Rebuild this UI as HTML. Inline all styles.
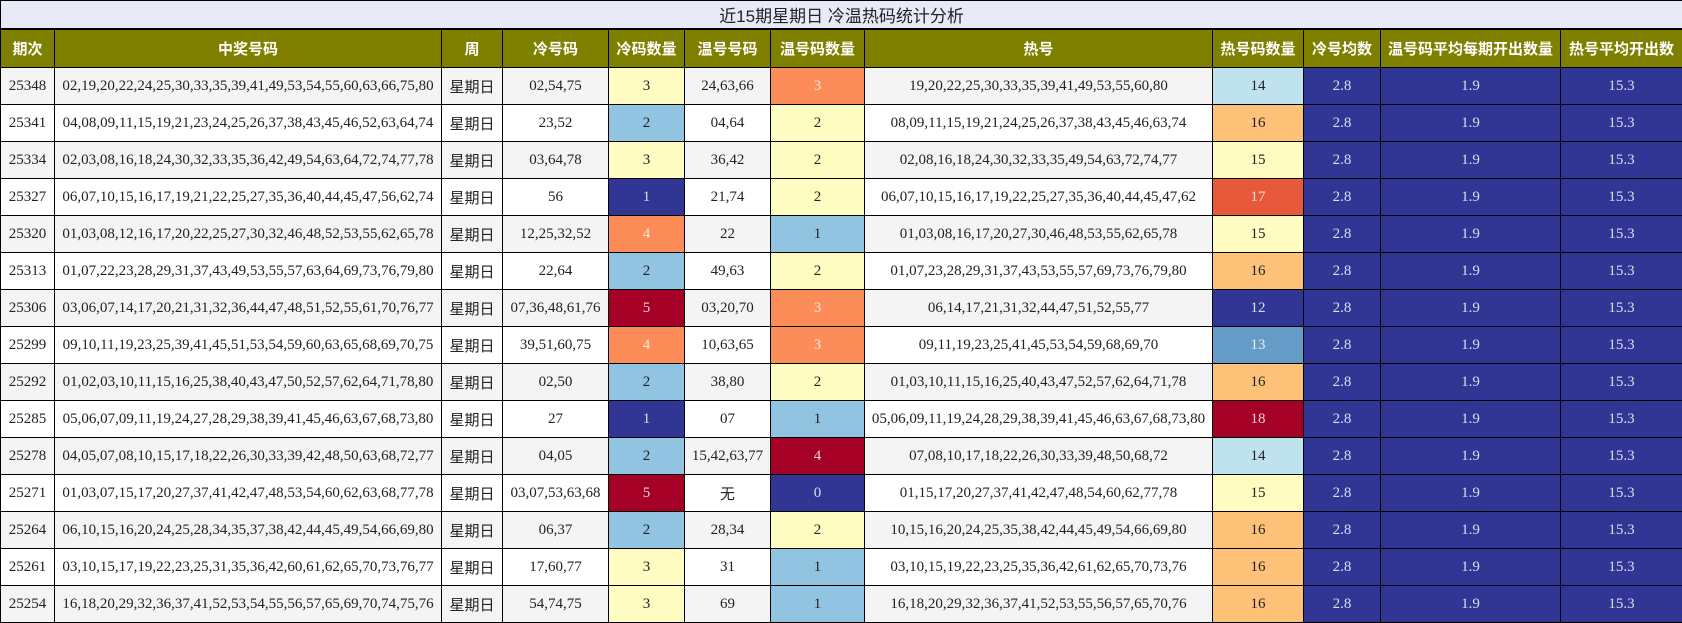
<!DOCTYPE html>
<html><head><meta charset="utf-8"><style>
html,body{margin:0;padding:0;background:#fff;}
table{border-collapse:collapse;table-layout:fixed;width:1682px;font-family:"Liberation Serif","Noto Serif CJK SC",serif;font-size:15px;color:#222;}
td,th{border:1px solid #000;text-align:center;padding:0;white-space:nowrap;overflow:hidden;}
.t td{height:27px;background:#e8eaf8;font-family:"Liberation Sans","Noto Sans CJK SC",sans-serif;font-size:17px;color:#222;border-bottom:2px solid #000;}
th{background:#808000;color:#fff;height:37px;font-family:"Liberation Sans","Noto Sans CJK SC",sans-serif;font-weight:bold;font-size:15px;}
tbody td{height:36px;}
tr.g td{background:#f4f4f4;}
tr.w td{background:#fff;}
.wk{font-family:"Liberation Sans","Noto Sans CJK SC",sans-serif;font-size:15px;}
tr td.y{background:#fefcc0;}
tr td.lb{background:#91c4e0;}
tr td.o{background:#fc8d59;color:#f4e6e0;}
tr td.n{background:#313695;color:#dde;}
tr td.r{background:#a50026;color:#f0d0d8;}
tr td.c{background:#bfe3ee;}
tr td.p{background:#fdc177;}
tr td.m{background:#649bc7;color:#e4eef6;}
tr td.rr{background:#e8593b;color:#f8dcd4;}
</style></head><body>
<table>
<colgroup><col style="width:54px"><col style="width:387px"><col style="width:61px"><col style="width:106px"><col style="width:76px"><col style="width:86px"><col style="width:94px"><col style="width:348px"><col style="width:91px"><col style="width:77px"><col style="width:180px"><col style="width:122px"></colgroup>
<tr class="t"><td colspan="12">近15期星期日 冷温热码统计分析</td></tr>
<tr><th>期次</th><th>中奖号码</th><th>周</th><th>冷号码</th><th>冷码数量</th><th>温号号码</th><th>温号码数量</th><th>热号</th><th>热号码数量</th><th>冷号均数</th><th>温号码平均每期开出数量</th><th>热号平均开出数</th></tr>
<tbody>
<tr class="g"><td>25348</td><td>02,19,20,22,24,25,30,33,35,39,41,49,53,54,55,60,63,66,75,80</td><td class="wk">星期日</td><td>02,54,75</td><td class="y">3</td><td>24,63,66</td><td class="o">3</td><td>19,20,22,25,30,33,35,39,41,49,53,55,60,80</td><td class="c">14</td><td class="n">2.8</td><td class="n">1.9</td><td class="n">15.3</td></tr>
<tr class="w"><td>25341</td><td>04,08,09,11,15,19,21,23,24,25,26,37,38,43,45,46,52,63,64,74</td><td class="wk">星期日</td><td>23,52</td><td class="lb">2</td><td>04,64</td><td class="y">2</td><td>08,09,11,15,19,21,24,25,26,37,38,43,45,46,63,74</td><td class="p">16</td><td class="n">2.8</td><td class="n">1.9</td><td class="n">15.3</td></tr>
<tr class="g"><td>25334</td><td>02,03,08,16,18,24,30,32,33,35,36,42,49,54,63,64,72,74,77,78</td><td class="wk">星期日</td><td>03,64,78</td><td class="y">3</td><td>36,42</td><td class="y">2</td><td>02,08,16,18,24,30,32,33,35,49,54,63,72,74,77</td><td class="y">15</td><td class="n">2.8</td><td class="n">1.9</td><td class="n">15.3</td></tr>
<tr class="w"><td>25327</td><td>06,07,10,15,16,17,19,21,22,25,27,35,36,40,44,45,47,56,62,74</td><td class="wk">星期日</td><td>56</td><td class="n">1</td><td>21,74</td><td class="y">2</td><td>06,07,10,15,16,17,19,22,25,27,35,36,40,44,45,47,62</td><td class="rr">17</td><td class="n">2.8</td><td class="n">1.9</td><td class="n">15.3</td></tr>
<tr class="g"><td>25320</td><td>01,03,08,12,16,17,20,22,25,27,30,32,46,48,52,53,55,62,65,78</td><td class="wk">星期日</td><td>12,25,32,52</td><td class="o">4</td><td>22</td><td class="lb">1</td><td>01,03,08,16,17,20,27,30,46,48,53,55,62,65,78</td><td class="y">15</td><td class="n">2.8</td><td class="n">1.9</td><td class="n">15.3</td></tr>
<tr class="w"><td>25313</td><td>01,07,22,23,28,29,31,37,43,49,53,55,57,63,64,69,73,76,79,80</td><td class="wk">星期日</td><td>22,64</td><td class="lb">2</td><td>49,63</td><td class="y">2</td><td>01,07,23,28,29,31,37,43,53,55,57,69,73,76,79,80</td><td class="p">16</td><td class="n">2.8</td><td class="n">1.9</td><td class="n">15.3</td></tr>
<tr class="g"><td>25306</td><td>03,06,07,14,17,20,21,31,32,36,44,47,48,51,52,55,61,70,76,77</td><td class="wk">星期日</td><td>07,36,48,61,76</td><td class="r">5</td><td>03,20,70</td><td class="o">3</td><td>06,14,17,21,31,32,44,47,51,52,55,77</td><td class="n">12</td><td class="n">2.8</td><td class="n">1.9</td><td class="n">15.3</td></tr>
<tr class="w"><td>25299</td><td>09,10,11,19,23,25,39,41,45,51,53,54,59,60,63,65,68,69,70,75</td><td class="wk">星期日</td><td>39,51,60,75</td><td class="o">4</td><td>10,63,65</td><td class="o">3</td><td>09,11,19,23,25,41,45,53,54,59,68,69,70</td><td class="m">13</td><td class="n">2.8</td><td class="n">1.9</td><td class="n">15.3</td></tr>
<tr class="g"><td>25292</td><td>01,02,03,10,11,15,16,25,38,40,43,47,50,52,57,62,64,71,78,80</td><td class="wk">星期日</td><td>02,50</td><td class="lb">2</td><td>38,80</td><td class="y">2</td><td>01,03,10,11,15,16,25,40,43,47,52,57,62,64,71,78</td><td class="p">16</td><td class="n">2.8</td><td class="n">1.9</td><td class="n">15.3</td></tr>
<tr class="w"><td>25285</td><td>05,06,07,09,11,19,24,27,28,29,38,39,41,45,46,63,67,68,73,80</td><td class="wk">星期日</td><td>27</td><td class="n">1</td><td>07</td><td class="lb">1</td><td>05,06,09,11,19,24,28,29,38,39,41,45,46,63,67,68,73,80</td><td class="r">18</td><td class="n">2.8</td><td class="n">1.9</td><td class="n">15.3</td></tr>
<tr class="g"><td>25278</td><td>04,05,07,08,10,15,17,18,22,26,30,33,39,42,48,50,63,68,72,77</td><td class="wk">星期日</td><td>04,05</td><td class="lb">2</td><td>15,42,63,77</td><td class="r">4</td><td>07,08,10,17,18,22,26,30,33,39,48,50,68,72</td><td class="c">14</td><td class="n">2.8</td><td class="n">1.9</td><td class="n">15.3</td></tr>
<tr class="w"><td>25271</td><td>01,03,07,15,17,20,27,37,41,42,47,48,53,54,60,62,63,68,77,78</td><td class="wk">星期日</td><td>03,07,53,63,68</td><td class="r">5</td><td class="wk">无</td><td class="n">0</td><td>01,15,17,20,27,37,41,42,47,48,54,60,62,77,78</td><td class="y">15</td><td class="n">2.8</td><td class="n">1.9</td><td class="n">15.3</td></tr>
<tr class="g"><td>25264</td><td>06,10,15,16,20,24,25,28,34,35,37,38,42,44,45,49,54,66,69,80</td><td class="wk">星期日</td><td>06,37</td><td class="lb">2</td><td>28,34</td><td class="y">2</td><td>10,15,16,20,24,25,35,38,42,44,45,49,54,66,69,80</td><td class="p">16</td><td class="n">2.8</td><td class="n">1.9</td><td class="n">15.3</td></tr>
<tr class="w"><td>25261</td><td>03,10,15,17,19,22,23,25,31,35,36,42,60,61,62,65,70,73,76,77</td><td class="wk">星期日</td><td>17,60,77</td><td class="y">3</td><td>31</td><td class="lb">1</td><td>03,10,15,19,22,23,25,35,36,42,61,62,65,70,73,76</td><td class="p">16</td><td class="n">2.8</td><td class="n">1.9</td><td class="n">15.3</td></tr>
<tr class="g"><td>25254</td><td>16,18,20,29,32,36,37,41,52,53,54,55,56,57,65,69,70,74,75,76</td><td class="wk">星期日</td><td>54,74,75</td><td class="y">3</td><td>69</td><td class="lb">1</td><td>16,18,20,29,32,36,37,41,52,53,55,56,57,65,70,76</td><td class="p">16</td><td class="n">2.8</td><td class="n">1.9</td><td class="n">15.3</td></tr>
</tbody></table>
</body></html>
